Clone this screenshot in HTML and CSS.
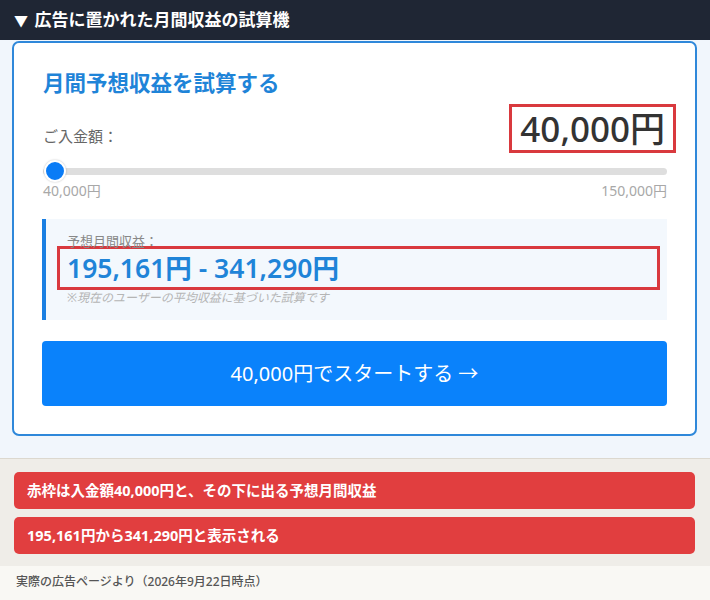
FILE: index.html
```html
<!DOCTYPE html>
<html lang="ja">
<head>
<meta charset="utf-8">
<title>広告に置かれた月間収益の試算機</title>
<link rel="stylesheet" href="styles.css">
</head>
<body>
<header class="bar"><span class="tri">▼</span> 広告に置かれた月間収益の試算機</header>
<section class="panel">
  <div class="card">
    <h2 class="title">月間予想収益を試算する</h2>
    <div class="amount-row">
      <span class="label">ご入金額：</span>
      <span class="amount">40,000円</span>
    </div>
    <div class="slider">
      <div class="track"></div>
      <div class="thumb"></div>
    </div>
    <div class="range">
      <span>40,000円</span>
      <span>150,000円</span>
    </div>
    <div class="result">
      <div class="result-label">予想月間収益：</div>
      <div class="result-value">195,161円 - 341,290円</div>
      <div class="result-note">※現在のユーザーの平均収益に基づいた試算です</div>
    </div>
    <div class="cta">40,000円でスタートする →</div>
  </div>
</section>
<section class="notes">
  <div class="note">赤枠は入金額40,000円と、その下に出る予想月間収益</div>
  <div class="note">195,161円から341,290円と表示される</div>
</section>
<footer class="source">実際の広告ページより（2026年9月22日時点）</footer>
</body>
</html>
```

FILE: styles.css
```css
* { box-sizing: border-box; }
html, body { margin: 0; padding: 0; }
body {
  font-family: "Noto Sans", "Noto Sans CJK JP", sans-serif;
  background: #f9f8f4;
  color: #333;
}
.bar {
  height: 40px;
  background: #1f2634;
  color: #fff;
  font-size: 17px;
  font-weight: 700;
  line-height: 40px;
  padding-left: 14px;
}
.tri { font-size: 14px; margin-right: 2px; }
.panel {
  background: #f1f6fc;
  padding: 1px 13px 22px 12px;
  border-bottom: 1px solid #dcd8cf;
}
.card {
  background: #fff;
  border: 2px solid #2f88da;
  border-radius: 7px;
  padding: 26px 28px 28px 29px;
}
.title {
  margin: 0;
  font-size: 21.5px;
  line-height: 27px;
  font-weight: 700;
  color: #1f84d8;
}
.amount-row {
  display: flex;
  justify-content: space-between;
  align-items: baseline;
  margin-top: 8px;
}
.label {
  font-size: 15px;
  color: #666;
}
.amount {
  border: 3px solid #d9393e;
  font-size: 35px;
  font-weight: 500;
  line-height: 43px;
  padding: 0 8px 0 8px;
  margin-right: -9px;
  color: #333;
}
.slider {
  position: relative;
  height: 22px;
  margin-top: 7px;
}
.track {
  position: absolute;
  left: 0; right: 0; top: 8px;
  height: 7px;
  border-radius: 4px;
  background: #dedede;
}
.thumb {
  position: absolute;
  left: 1px; top: 0;
  width: 22px; height: 22px;
  border-radius: 50%;
  background: #0a7cf6;
  border: 2px solid #fff;
  box-shadow: 0 0 2px rgba(0,0,0,0.25);
}
.range {
  display: flex;
  justify-content: space-between;
  font-size: 14px;
  line-height: 17px;
  color: #a8a8a8;
}
.result {
  margin-top: 20px;
  margin-left: -1px;
  background: #f3f8fd;
  border-left: 4px solid #1a7fe2;
  padding: 14px 7px 14px 11px;
}
.result-label {
  font-size: 13px;
  line-height: 16px;
  color: #888;
  padding-left: 10px;
}
.result-value {
  margin-top: -3px;
  border: 3px solid #d9393e;
  font-size: 26.5px;
  font-weight: 600;
  line-height: 38px;
  color: #1f84d8;
  padding-left: 7px;
}
.result-note {
  font-size: 12px;
  line-height: 16px;
  font-style: italic;
  color: #b5b5b5;
  padding-left: 10px;
}
.cta {
  margin-top: 21px;
  margin-left: -1px;
  height: 65px;
  border-radius: 4px;
  background: #0a82fb;
  color: #fff;
  font-size: 20px;
  line-height: 65px;
  text-align: center;
}
.notes {
  background: #efede8;
  padding: 13px 15px 12px 14px;
  display: flex;
  flex-direction: column;
  gap: 8px;
}
.note {
  background: #e13e3f;
  color: #fff;
  font-size: 14.5px;
  font-weight: 700;
  height: 37px;
  line-height: 37px;
  padding-left: 13px;
  border-radius: 5px;
}
.source {
  font-size: 12px;
  font-weight: 500;
  color: #555;
  padding: 7px 16px;
  line-height: 18px;
}
```
